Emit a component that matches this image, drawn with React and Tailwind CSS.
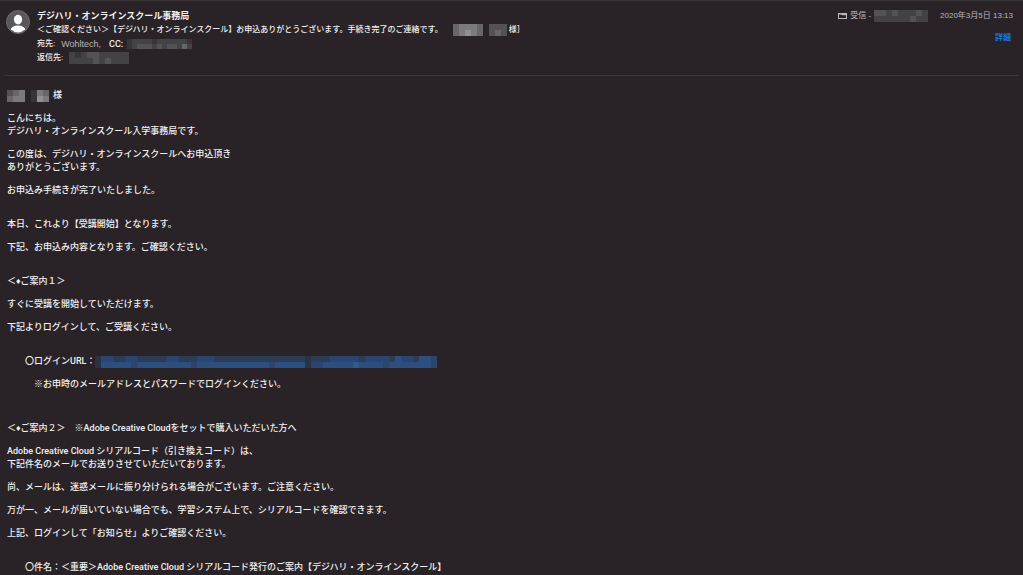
import React from "react";

const paragraphs = [
  { lines: ["こんにちは。", "デジハリ・オンラインスクール入学事務局です。"] },
  { lines: ["この度は、デジハリ・オンラインスクールへお申込頂き", "ありがとうございます。"] },
  { lines: ["お申込み手続きが完了いたしました。"] },
  { lines: ["本日、これより【受講開始】となります。"], section: true },
  { lines: ["下記、お申込み内容となります。ご確認ください。"] },
  { lines: ["＜♦ご案内１＞"], section: true },
  { lines: ["すぐに受講を開始していただけます。"] },
  { lines: ["下記よりログインして、ご受講ください。"] },
  { lines: ["　　〇ログインURL："], section: true, link: true },
  { lines: ["　　　※お申時のメールアドレスとパスワードでログインください。"] },
  { lines: ["＜♦ご案内２＞　※Adobe Creative Cloudをセットで購入いただいた方へ"], chapter: true },
  {
    lines: [
      "Adobe Creative Cloud シリアルコード（引き換えコード）は、",
      "下記件名のメールでお送りさせていただいております。",
    ],
  },
  { lines: ["尚、メールは、迷惑メールに振り分けられる場合がございます。ご注意ください。"] },
  { lines: ["万が一、メールが届いていない場合でも、学習システム上で、シリアルコードを確認できます。"] },
  { lines: ["上記、ログインして「お知らせ」よりご確認ください。"] },
  {
    lines: ["　　〇件名：＜重要＞Adobe Creative Cloud シリアルコード発行のご案内【デジハリ・オンラインスクール】"],
    section: true,
  },
];

// one string per row, each digit is an index into the palette
const grey = ["#292327", "#38343a", "#454246", "#555256", "#69666a", "#7d7a7e", "#929094"];
const blue = ["#292327", "#2a3346", "#2b3c58", "#2b456e", "#2d4f80", "#33598e"];

const Mosaic = ({ rows, palette = grey, cell = 6 }) => {
  const width = rows[0].length * cell;
  const height = rows.length * cell;
  return (
    <svg
      width={width}
      height={height}
      viewBox={`0 0 ${width} ${height}`}
      shapeRendering="crispEdges"
      aria-hidden="true"
      className="inline-block shrink-0 align-middle"
    >
      {rows.map((row, y) =>
        row.split("").map((shade, x) => (
          <rect
            key={`${x}-${y}`}
            x={x * cell}
            y={y * cell}
            width={cell}
            height={cell}
            fill={palette[Number(shade)]}
          />
        ))
      )}
    </svg>
  );
};

const Avatar = () => (
  <svg viewBox="0 0 24 24" className="size-6 shrink-0" aria-hidden="true">
    <defs>
      <linearGradient id="avatar-bg" x1="0" y1="0" x2="0" y2="1">
        <stop offset="0" stopColor="#5b595c" />
        <stop offset="1" stopColor="#59575a" />
      </linearGradient>
      <clipPath id="avatar-clip">
        <circle cx="12" cy="12" r="10.4" />
      </clipPath>
    </defs>
    <circle cx="12" cy="12" r="11.5" fill="url(#avatar-bg)" stroke="#757376" strokeWidth="0.8" />
    <g fill="#fff" clipPath="url(#avatar-clip)">
      <ellipse cx="12" cy="9.6" rx="4.1" ry="4.9" />
      <ellipse cx="12" cy="20" rx="7.6" ry="4.4" />
    </g>
  </svg>
);

const MailboxIcon = () => (
  <svg viewBox="0 0 9 8" className="h-2 w-[9px] shrink-0" aria-hidden="true">
    <rect x="0.5" y="1.5" width="8" height="5" fill="none" stroke="#b9b7ba" />
    <path d="M0.3 2h3.2l0.8 0.6h4.4" fill="none" stroke="#b9b7ba" strokeWidth="1.2" />
  </svg>
);

const MailHeader = () => (
  <header className="mx-1 flex border-b border-[#3c373b] pt-2 pr-1.5 pb-2.5 pl-0.5">
    <div className="pt-px">
      <Avatar />
    </div>
    <div className="ml-[7px] min-w-0 flex-1 text-[8px] leading-[14px]">
      <h1 className="text-[9px] font-bold">デジハリ・オンラインスクール事務局</h1>
      <p className="flex items-center font-medium">
        <span>
          ＜ご確認ください＞【デジハリ・オンラインスクール】お申込ありがとうございます。手続き完了のご連絡です。
        </span>
        <span className="ml-2.5 flex items-center gap-1.5">
          <Mosaic rows={["45554", "45654"]} />
          <Mosaic rows={["333", "343"]} />
          <span className="-ml-1">様］</span>
        </span>
      </p>
      <p className="flex items-center">
        <span className="font-medium">宛先:</span>
        <span className="ml-1.5 text-[9px] text-[#b5b3b6]">Wohltech,</span>
        <span className="ml-2 font-['Roboto',sans-serif] text-[9px] font-medium">CC:</span>
        <span className="ml-1 flex">
          <Mosaic rows={["1222212222221", "1233323233242"]} cell={5} />
        </span>
      </p>
      <p className="flex items-center">
        <span className="font-medium">返信先:</span>
        <span className="ml-1.5 flex">
          <Mosaic rows={["2123322222", "2222323222"]} />
        </span>
      </p>
    </div>
    <div className="flex shrink-0 flex-col items-end gap-2 text-[8px] leading-[14px] text-[#b9b7ba]">
      <div className="flex items-center">
        <MailboxIcon />
        <span className="ml-[3px]">受信 -</span>
        <span className="ml-[3px] flex">
          <Mosaic rows={["332322232", "222222322"]} />
        </span>
        <time className="ml-3" dateTime="2020-03-05T13:13">
          2020年3月5日 13:13
        </time>
      </div>
      <a href="#details" className="pr-0.5 font-bold text-[#1a75dc]">
        詳細
      </a>
    </div>
  </header>
);

const Paragraph = ({ lines, section, chapter, link }) => (
  <p className={chapter ? "mt-[31px]" : section ? "mt-[21px]" : "mt-2.5"}>
    {lines.map((line) => (
      <span key={line} className="block whitespace-pre-wrap">
        {line}
        {link && (
          <a href="#login" aria-label="ログインURL">
            <Mosaic
              palette={blue}
              rows={[
                "133223322222332223332222222222222221222333332333324332443",
                "144444344444444434444444444443444441334444454444344444443",
              ]}
            />
          </a>
        )}
      </span>
    ))}
  </p>
);

export default function App() {
  return (
    <div className="min-h-screen border-t border-[#3a3539] bg-[#292327] font-['Liberation_Sans','Noto_Sans_CJK_JP',sans-serif] text-[#f1f0f1]">
      <MailHeader />
      <main className="px-[7px] pt-[13px] font-['Roboto','Liberation_Sans','Noto_Sans_CJK_JP',sans-serif] text-[9px] leading-[13px] font-medium">
        <p className="flex items-center gap-1">
          <Mosaic rows={["3450154", "4550165"]} />
          様
        </p>
        {paragraphs.map((paragraph) => (
          <Paragraph key={paragraph.lines[0]} {...paragraph} />
        ))}
      </main>
    </div>
  );
}
